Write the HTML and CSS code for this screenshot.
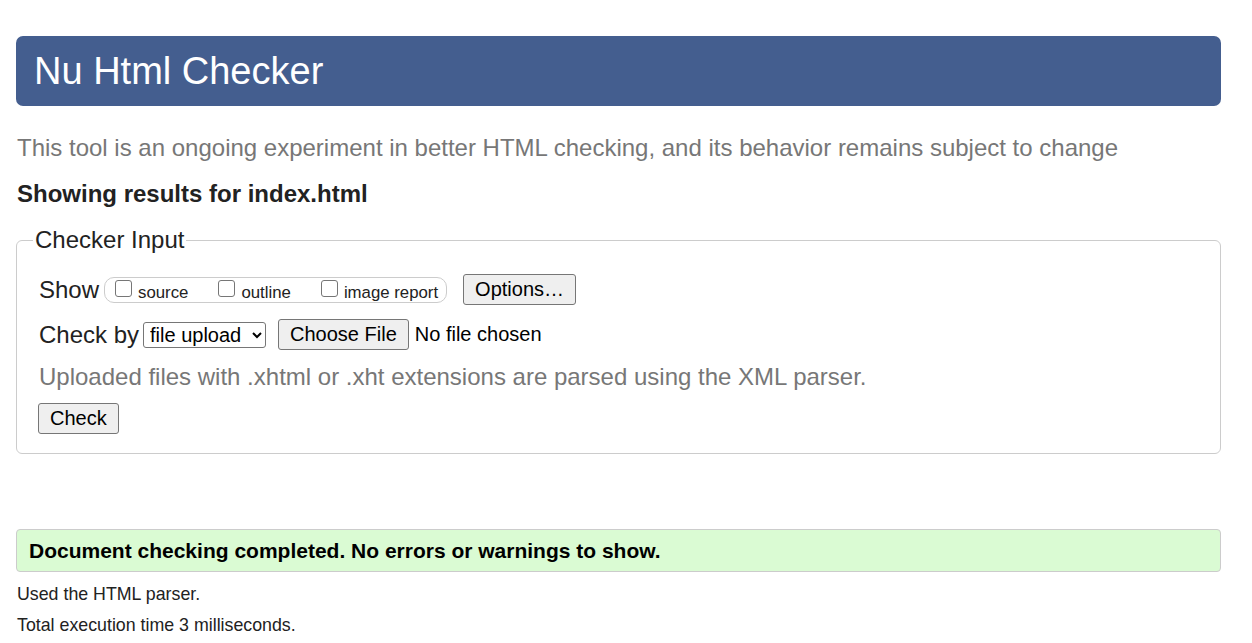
FILE: index.html
```html
<!DOCTYPE html>
<html lang="en">
<head>
<meta charset="utf-8">
<title>Nu Html Checker</title>
<link rel="stylesheet" href="styles.css">
</head>
<body>
<h1 class="title">Nu Html Checker</h1>
<p class="intro">This tool is an ongoing experiment in better HTML checking, and its behavior remains subject to change</p>
<h2 class="results-for">Showing results for index.html</h2>
<fieldset class="checker">
  <legend class="legend">Checker Input</legend>
  <div class="row row-show">
    <span class="label">Show</span>
    <span class="show-group">
      <label class="opt"><input class="cb" type="checkbox"><span>source</span></label>
      <label class="opt"><input class="cb" type="checkbox"><span>outline</span></label>
      <label class="opt"><input class="cb" type="checkbox"><span>image report</span></label>
    </span>
    <button class="btn btn-options" type="button">Options…</button>
  </div>
  <div class="row row-checkby">
    <span class="label">Check by</span>
    <select class="select"><option>file upload</option></select>
    <button class="btn btn-file" type="button">Choose File</button>
    <span class="nofile">No file chosen</span>
  </div>
  <p class="hint">Uploaded files with .xhtml or .xht extensions are parsed using the XML parser.</p>
  <div class="row row-submit">
    <button class="btn" type="button">Check</button>
  </div>
</fieldset>
<p class="success">Document checking completed. No errors or warnings to show.</p>
<p class="meta">Used the HTML parser.</p>
<p class="meta">Total execution time 3 milliseconds.</p>
</body>
</html>
```
FILE: styles.css
```css
html, body {
  background: #fff;
}
body {
  margin: 0 31px 0 16px;
  font-family: "Liberation Sans", Arial, sans-serif;
  color: #222;
}
.title {
  margin: 36px 0 0;
  height: 70px;
  line-height: 70px;
  padding: 0 18px;
  background: #445e8f;
  color: #fff;
  font-size: 38px;
  font-weight: normal;
  border-radius: 7px;
}
.intro {
  margin: 28px 0 0 1px;
  font-size: 24px;
  line-height: 28px;
  color: #777;
}
.results-for {
  margin: 18px 0 0 1px;
  font-size: 24px;
  line-height: 28px;
  font-weight: bold;
  color: #222;
}
.checker {
  margin: 18px 0 0;
  padding: 20px 20px 19px 21px;
  border: 1px solid #ccc;
  border-radius: 6px;
  min-width: 0;
}
.legend {
  margin-left: -5px;
  padding: 0 2px;
  font-size: 24px;
  line-height: 28px;
  color: #222;
}
.row {
  display: flex;
  align-items: center;
  height: 31px;
}
.row-checkby {
  margin-top: 14px;
}
.label {
  font-size: 24px;
  line-height: 28px;
  margin-left: 1px;
  color: #222;
}
.show-group {
  display: flex;
  align-items: center;
  height: 26px;
  box-sizing: border-box;
  margin-left: 5px;
  padding: 0 8px 0 10px;
  border: 1px solid #ccc;
  border-radius: 10px;
  margin-top: 1px;
}
.opt {
  display: flex;
  align-items: center;
  font-size: 16.8px;
  color: #222;
}
.opt + .opt {
  margin-left: 30px;
}
.opt span {
  margin-left: 6px;
  margin-top: 5px;
}
.cb {
  appearance: none;
  -webkit-appearance: none;
  box-sizing: border-box;
  width: 17px;
  height: 17px;
  margin: -4px 0 0;
  background: #fff;
  border: 1px solid #767676;
  border-radius: 3px;
}
.btn {
  font-family: "Liberation Sans", Arial, sans-serif;
  font-size: 20px;
  height: 31px;
  padding: 0 11px;
  background: #efefef;
  border: 1px solid #767676;
  border-radius: 3px;
  color: #000;
}
.btn-options {
  margin-left: 16px;
}
.select {
  margin-left: 4px;
  font-family: "Liberation Sans", Arial, sans-serif;
  font-size: 20px;
  height: 26px;
  width: 123px;
  padding: 0 2px;
  border: 1px solid #767676;
  border-radius: 3px;
  background: #fff;
  color: #000;
}
.btn-file {
  margin-left: 12px;
}
.nofile {
  margin-left: 6px;
  font-size: 20px;
  color: #000;
}
.hint {
  margin: 13px 0 0 1px;
  font-size: 24px;
  line-height: 28px;
  color: #777;
}
.row-submit {
  margin-top: 12px;
}
.success {
  margin: 75px 0 0;
  height: 43px;
  box-sizing: border-box;
  line-height: 41px;
  padding: 0 12px;
  background: #dafbd3;
  border: 1px solid #ccc;
  border-radius: 4px;
  font-size: 21px;
  font-weight: bold;
  color: #000;
}
.meta {
  margin: 12px 0 0 1px;
  font-size: 17.8px;
  line-height: 20px;
  color: #222;
}
.meta + .meta {
  margin-top: 11px;
}
```
